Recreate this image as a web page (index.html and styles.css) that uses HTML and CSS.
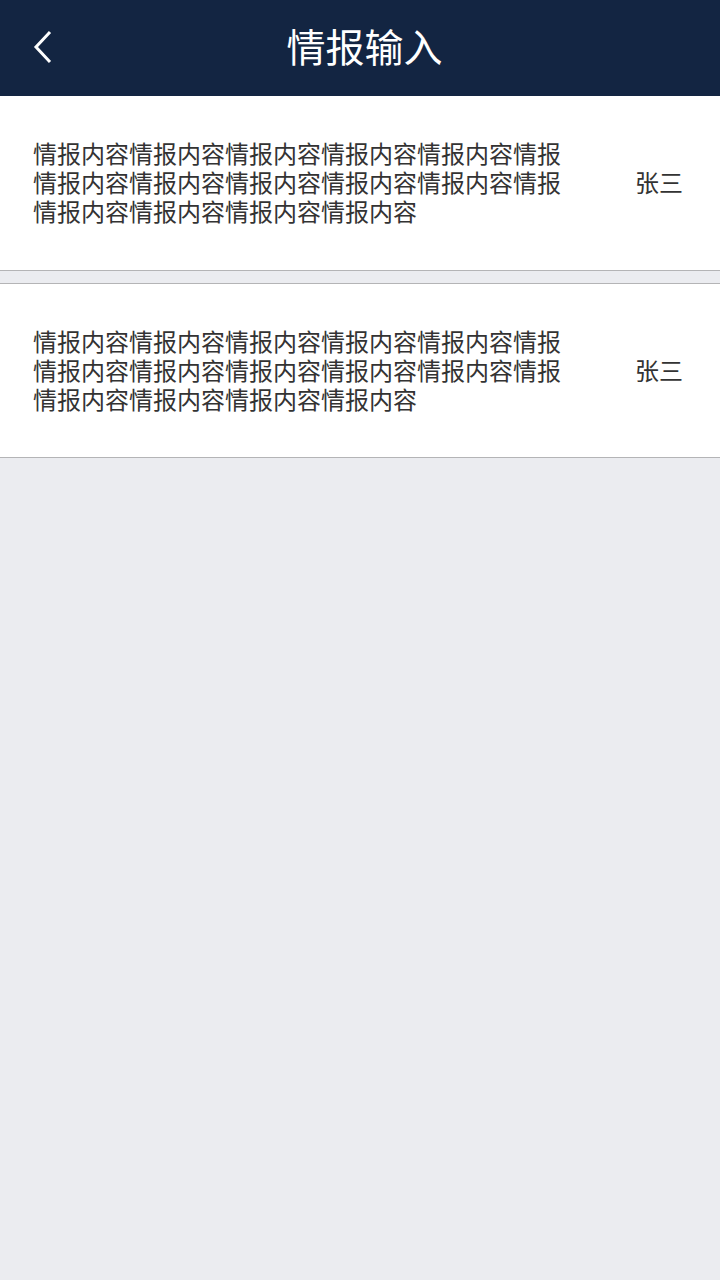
FILE: index.html
```html
<!DOCTYPE html>
<html lang="zh">
<head>
<meta charset="utf-8">
<link rel="stylesheet" href="styles.css">
</head>
<body>
<header class="topbar">
  <svg class="back" width="24" height="34" viewBox="0 0 24 34"><path d="M19 2 L5 17 L19 32" fill="none" stroke="#fff" stroke-width="3"/></svg>
  <h1 class="title">情报输入</h1>
</header>
<div class="list">
  <div class="item">
    <p class="content">情报内容情报内容情报内容情报内容情报内容情报情报内容情报内容情报内容情报内容情报内容情报情报内容情报内容情报内容情报内容</p>
    <span class="name">张三</span>
  </div>
  <div class="item">
    <p class="content">情报内容情报内容情报内容情报内容情报内容情报情报内容情报内容情报内容情报内容情报内容情报情报内容情报内容情报内容情报内容</p>
    <span class="name">张三</span>
  </div>
</div>
</body>
</html>
```
FILE: styles.css
```css
html, body {
  margin: 0;
  padding: 0;
  background: #ebecf0;
  font-family: "Noto Sans CJK SC", "Noto Sans", sans-serif;
}
.topbar {
  height: 96px;
  background: #132542;
  display: flex;
  align-items: center;
  justify-content: center;
  position: relative;
}
.back {
  position: absolute;
  left: 31px;
  top: 30px;
}
.title {
  margin: 0;
  padding: 0 0 5px 9px;
  color: #fff;
  font-size: 39px;
  font-weight: 400;
  line-height: 1;
}
.list {
  display: flex;
  flex-direction: column;
  gap: 12px;
}
.item {
  background: #fff;
  min-height: 175px;
  display: flex;
  align-items: center;
  justify-content: space-between;
  padding: 0 37px 3px 33px;
  border-bottom: 1px solid #b4b4b6;
  box-sizing: border-box;
}
.item + .item {
  border-top: 1px solid #b4b4b6;
}
.content {
  margin: 0;
  width: 540px;
  font-size: 24px;
  line-height: 29px;
  color: #333;
  word-break: break-all;
}
.name {
  font-size: 24px;
  color: #333;
  line-height: 29px;
}
```
